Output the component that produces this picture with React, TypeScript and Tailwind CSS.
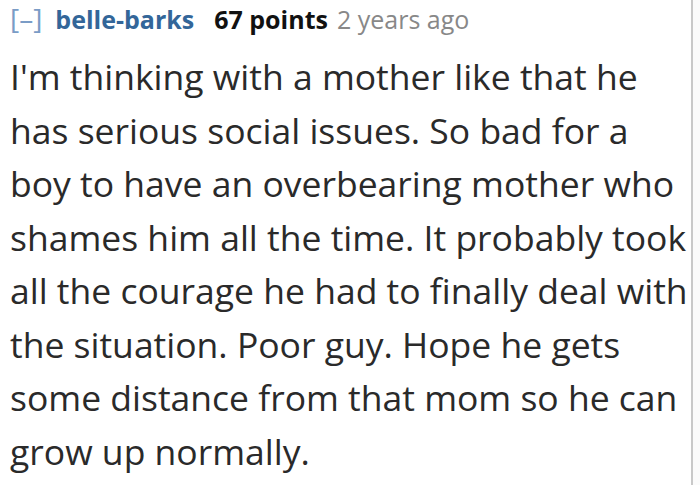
const lines = [
  "I'm thinking with a mother like that he",
  "has serious social issues. So bad for a",
  "boy to have an overbearing mother who",
  "shames him all the time. It probably took",
  "all the courage he had to finally deal with",
  "the situation. Poor guy. Hope he gets",
  "some distance from that mom so he can",
  "grow up normally.",
]

export default function App() {
  return (
    <div className="w-[700px] h-[485px] bg-[#fbfbfb] overflow-hidden font-['Open_Sans',sans-serif]">
      <div className="w-[693px] h-full bg-white border-r-2 border-[#c9c9c9] pl-[10px]">
        {/* Comment header */}
        <div className="flex items-baseline h-[50px] text-[25px] leading-[36px] whitespace-nowrap">
          <span className="text-[#7a9cc6] text-[28px] mr-[13px]">[–]</span>
          <span className="font-bold text-[#336699] mr-[20px]">belle-barks</span>
          <span className="font-bold text-[#111] mr-[9px]">67 points</span>
          <span className="text-[#888]">2 years ago</span>
        </div>
        {/* Comment body */}
        <p className="text-[35.5px] leading-[53.5px] text-[#2a2a2a] whitespace-nowrap">
          {lines.map((l) => (
            <span key={l} className="block">
              {l}
            </span>
          ))}
        </p>
      </div>
    </div>
  )
}
